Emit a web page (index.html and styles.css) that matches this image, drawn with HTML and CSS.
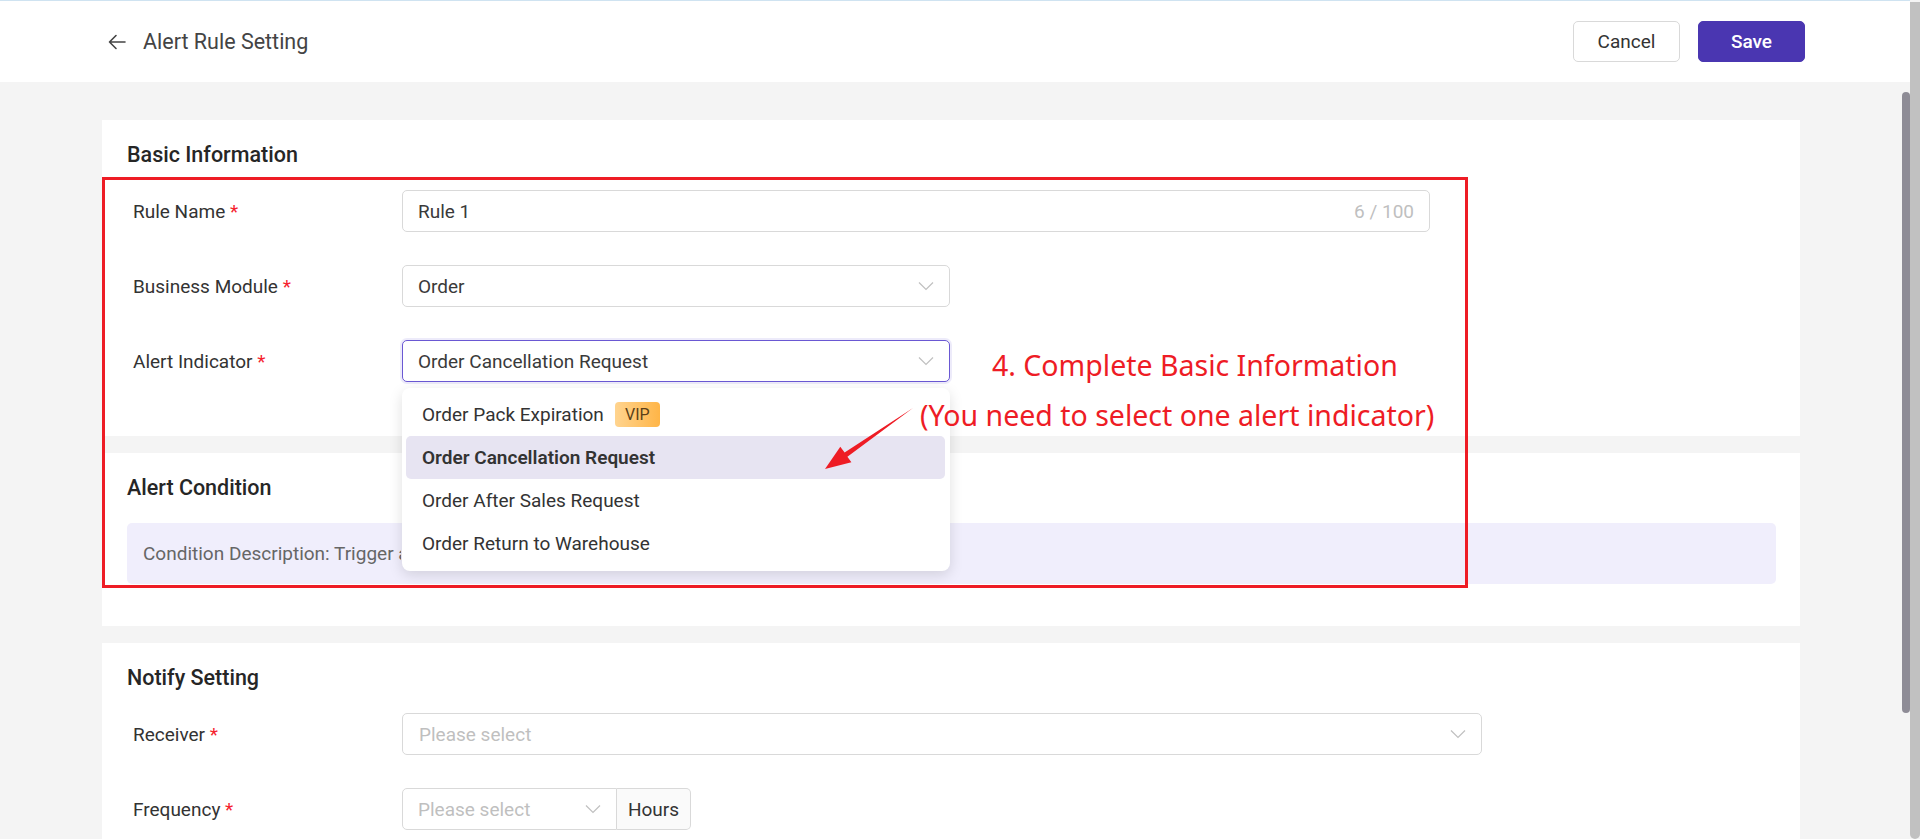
FILE: index.html
```html
<!DOCTYPE html>
<html lang="en">
<head>
<meta charset="utf-8">
<title>Alert Rule Setting</title>
<link rel="stylesheet" href="styles.css">
</head>
<body>
<div class="page">
  <header class="header">
    <div class="header-left">
      <svg class="back-icon" width="20" height="20" viewBox="0 0 20 20"><path d="M18 10H2.5M9 3.5L2.5 10L9 16.5" fill="none" stroke="#444" stroke-width="1.6" stroke-linecap="round" stroke-linejoin="round"/></svg>
      <span class="page-title">Alert Rule Setting</span>
    </div>
    <div class="header-actions">
      <button class="btn">Cancel</button>
      <button class="btn btn-primary">Save</button>
    </div>
  </header>

  <main class="content">
    <section class="card card-basic">
      <h2 class="card-title">Basic Information</h2>
      <div class="form-row">
        <label class="form-label">Rule Name <span class="req">*</span></label>
        <div class="input input-wide">
          <span class="value">Rule 1</span>
          <span class="counter">6 / 100</span>
        </div>
      </div>
      <div class="form-row">
        <label class="form-label">Business Module <span class="req">*</span></label>
        <div class="input select input-mid">
          <span class="value">Order</span>
          <svg class="chev" width="16" height="10" viewBox="0 0 16 10"><path d="M1 1.5L8 8.5L15 1.5" fill="none" stroke="#c0c0c0" stroke-width="1.2"/></svg>
        </div>
      </div>
      <div class="form-row">
        <label class="form-label">Alert Indicator <span class="req">*</span></label>
        <div class="input select input-mid focused">
          <span class="value">Order Cancellation Request</span>
          <svg class="chev" width="16" height="10" viewBox="0 0 16 10"><path d="M1 1.5L8 8.5L15 1.5" fill="none" stroke="#c0c0c0" stroke-width="1.2"/></svg>
        </div>
      </div>
    </section>

    <section class="card card-condition">
      <h2 class="card-title">Alert Condition</h2>
      <div class="condition-box"><span class="condition-text">Condition Description: Trigger alert when a buyer submits a cancellation request</span></div>
    </section>

    <section class="card card-notify">
      <h2 class="card-title">Notify Setting</h2>
      <div class="form-row">
        <label class="form-label">Receiver <span class="req">*</span></label>
        <div class="input select input-receiver">
          <span class="placeholder">Please select</span>
          <svg class="chev" width="16" height="10" viewBox="0 0 16 10"><path d="M1 1.5L8 8.5L15 1.5" fill="none" stroke="#c0c0c0" stroke-width="1.2"/></svg>
        </div>
      </div>
      <div class="form-row">
        <label class="form-label">Frequency <span class="req">*</span></label>
        <div class="input-group">
          <div class="input select input-freq">
            <span class="placeholder">Please select</span>
            <svg class="chev" width="16" height="10" viewBox="0 0 16 10"><path d="M1 1.5L8 8.5L15 1.5" fill="none" stroke="#c0c0c0" stroke-width="1.2"/></svg>
          </div>
          <span class="addon">Hours</span>
        </div>
      </div>
    </section>
  </main>

  <div class="dropdown">
    <div class="dd-item">Order Pack Expiration <span class="vip">VIP</span></div>
    <div class="dd-item selected">Order Cancellation Request</div>
    <div class="dd-item">Order After Sales Request</div>
    <div class="dd-item">Order Return to Warehouse</div>
  </div>

  <div class="annot-box"></div>
  <div class="annot-text">
    <div class="annot-line1">4. Complete Basic Information</div>
    <div class="annot-line2">(You need to select one alert indicator)</div>
  </div>
  <svg class="annot-arrow" width="100" height="75" viewBox="820 400 100 75">
    <polygon points="913,408 847.4,456.7 851.4,462.3 825,469 840.3,446.8 844.6,452.6" fill="#ee1c25"/>
  </svg>
</div>
<div class="vscroll"><div class="vscroll-thumb"></div></div>
</body>
</html>
```

FILE: styles.css
```css
* { box-sizing: border-box; }

html, body { margin: 0; padding: 0; }

body {
  height: 839px;
  overflow: hidden;
  display: flex;
  background: #f4f4f4;
  font-family: Roboto, "Liberation Sans", Arial, sans-serif;
  font-size: 19px;
  color: #333;
}

.page {
  flex: 1;
  min-width: 0;
  position: relative;
}

/* Header */
.header {
  height: 82px;
  background: #fff;
  border-top: 1px solid #cfe3f1;
  display: flex;
  align-items: center;
  justify-content: space-between;
  padding: 0 105px 0 107px;
}

.header-left {
  display: flex;
  align-items: center;
  gap: 16px;
}

.back-icon { display: block; }

.page-title {
  font-size: 21.5px;
  color: #444;
}

.header-actions {
  display: flex;
  gap: 18px;
}

.btn {
  width: 107px;
  height: 41px;
  border: 1px solid #d9d9d9;
  border-radius: 5px;
  background: #fff;
  font-family: inherit;
  font-size: 19px;
  color: #333;
  cursor: pointer;
}

.btn-primary {
  background: #4a36b1;
  border-color: #4a36b1;
  color: #fff;
  font-weight: 500;
}

/* Content */
.content {
  padding: 38px 110px 0 102px;
  display: flex;
  flex-direction: column;
  gap: 17px;
}

.card {
  background: #fff;
  padding: 22px 24px 21px 25px;
}

.card-condition { padding-bottom: 42px; }

.card-title {
  width: fit-content;
  margin: 1px 0 23px;
  font-size: 21.5px;
  line-height: 24px;
  font-weight: 500;
  color: #262626;
}

.form-row {
  display: flex;
  align-items: center;
  height: 42px;
  margin-bottom: 33px;
}

.form-label {
  width: 275px;
  flex: none;
  padding-left: 6px;
  color: #333;
}

.req { color: #f5222d; }

.input {
  height: 42px;
  border: 1px solid #d9d9d9;
  border-radius: 5px;
  background: #fff;
  display: flex;
  align-items: center;
  justify-content: space-between;
  padding: 0 15px 0 15px;
  color: #3a3a3a;
}

.input .value { white-space: nowrap; }

.input-wide { width: 1028px; }
.input-mid { width: 548px; }
.input-receiver { width: 1080px; padding-left: 16px; }

.counter { color: #bfbfbf; }

.placeholder { color: #bfbfbf; }

.chev { display: block; flex: none; }

.focused {
  border-color: #6a58d3;
  box-shadow: 0 0 0 2px rgba(106, 88, 211, 0.12);
}

.input-group { display: flex; }

.input-freq {
  width: 215px;
  border-radius: 5px 0 0 5px;
}

.addon {
  width: 74px;
  height: 42px;
  border: 1px solid #d9d9d9;
  border-left: none;
  border-radius: 0 5px 5px 0;
  background: #fafafa;
  display: flex;
  align-items: center;
  justify-content: center;
  color: #333;
}

.condition-box {
  height: 61px;
  background: #f0eefc;
  border-radius: 5px;
  display: flex;
  align-items: center;
  padding-left: 16px;
  color: #666;
}

.condition-text {
  display: block;
  width: 258px;
  overflow: hidden;
  white-space: nowrap;
}

/* Dropdown menu */
.dropdown {
  position: absolute;
  left: 402px;
  top: 388px;
  width: 548px;
  background: #fff;
  border-radius: 8px;
  padding: 5px 5px 6px 4px;
  box-shadow: 0 4px 14px rgba(0, 0, 0, 0.13);
}

.dd-item {
  height: 43px;
  display: flex;
  align-items: center;
  padding-left: 16px;
  border-radius: 5px;
  color: #333;
  white-space: nowrap;
}

.dd-item.selected {
  background: #e7e4f2;
  font-weight: 600;
}

.vip {
  margin-left: 11px;
  width: 45px;
  height: 25px;
  border-radius: 4px;
  background: linear-gradient(90deg, #ffd48f, #ffb547);
  color: #5b3f18;
  font-size: 16px;
  display: inline-flex;
  align-items: center;
  justify-content: center;
}

/* Annotation overlay */
.annot-box {
  position: absolute;
  left: 102px;
  top: 177px;
  width: 1366px;
  height: 411px;
  border: 3px solid #ee1c25;
}

.annot-text {
  position: absolute;
  left: 920px;
  top: 340px;
  font-family: "Noto Sans", "Open Sans", sans-serif;
  font-size: 28.5px;
  line-height: 50px;
  color: #ee1c25;
  white-space: nowrap;
}

.annot-line1 { padding-left: 72px; }

.annot-arrow {
  position: absolute;
  left: 820px;
  top: 400px;
}

/* Scrollbar */
.vscroll {
  width: 10px;
  flex: none;
  margin-top: 2px;
  background: #c1c1c1;
  border-radius: 0 0 5px 5px;
  position: relative;
}

.vscroll-thumb {
  position: absolute;
  left: -8px;
  top: 90px;
  width: 8px;
  height: 621px;
  background: #8e8c96;
  border-radius: 4px;
}
```
